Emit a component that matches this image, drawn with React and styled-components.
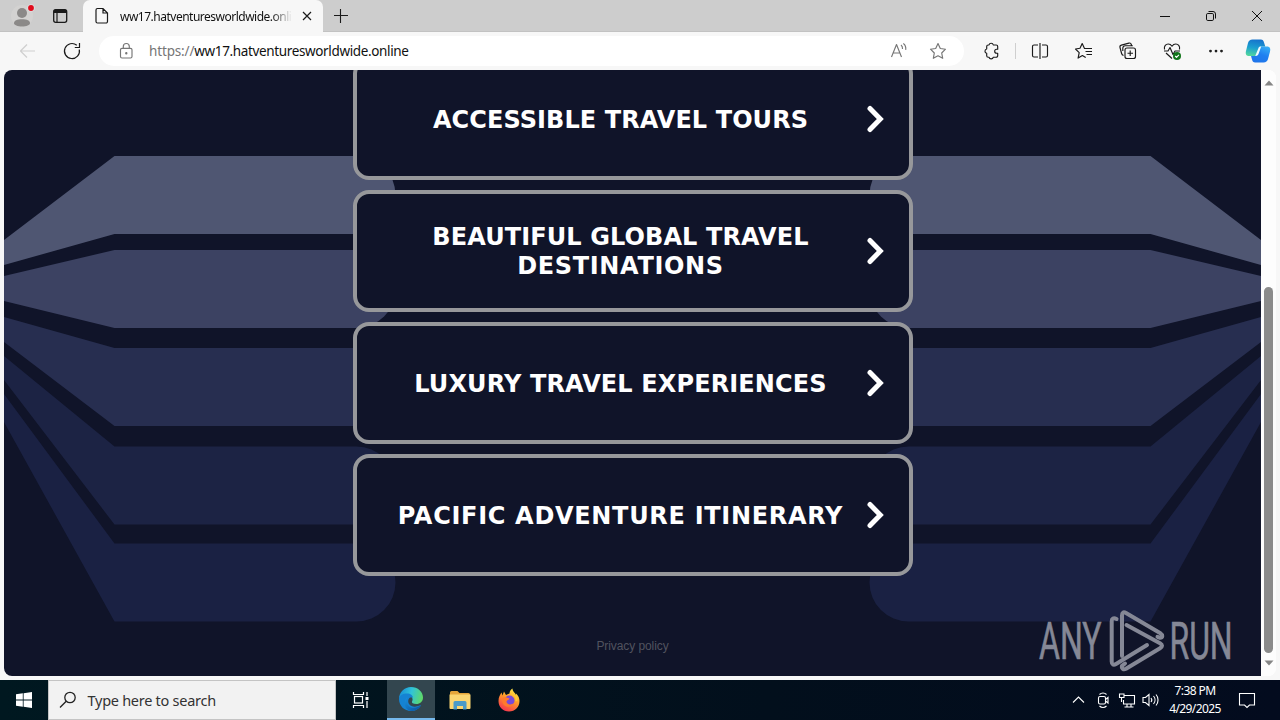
import styled, { createGlobalStyle } from "styled-components";

const links = [
  { lines: ["Accessible Travel Tours"], spacing: 0.08 },
  { lines: ["Beautiful Global Travel", "Destinations"], spacing: 0.1 },
  { lines: ["Luxury Travel Experiences"], spacing: 0.13 },
  { lines: ["Pacific Adventure Itinerary"], spacing: 0.69 },
];

// knee/edge heights of every stripe, measured inside the page
const stripes = [
  { color: "#4f5672", edge: [170, 195], knee: 86 },
  { color: "#3c4262", edge: [206, 231], knee: 180 },
  { color: "#272e50", edge: [247, 272], knee: 278 },
  { color: "#1c2344", edge: [286, 310], knee: 376.5 },
  { color: "#1a2143", edge: [324, 352], knee: 473.5 },
];

export default function App() {
  return (
    <Desktop>
      <GlobalStyle />
      <TitleBar />
      <Toolbar />
      <Content>
        <Page>
          <Stripes />
          <LinkList>
            {links.map(({ lines, spacing }) => (
              <LinkCard key={lines[0]} $spacing={spacing}>
                <LinkText>
                  {lines.map((line, i) => (
                    <LinkLine key={line} $spacing={i === 0 ? spacing : 0.65}>
                      {line}
                    </LinkLine>
                  ))}
                </LinkText>
                <Chevron />
              </LinkCard>
            ))}
          </LinkList>
          <Privacy>Privacy policy</Privacy>
          <Watermark />
        </Page>
        <Scrollbar>
          <svg width="10" height="6" viewBox="0 0 10 6">
            <path d="M5 0.5L9.5 5.5H0.5z" fill="#858585" />
          </svg>
          <Thumb />
          <svg width="10" height="6" viewBox="0 0 10 6">
            <path d="M5 5.5L9.5 0.5H0.5z" fill="#858585" />
          </svg>
        </Scrollbar>
      </Content>
      <Taskbar />
    </Desktop>
  );
}

function TitleBar() {
  return (
    <TitleRow>
      <TitleLeft>
        <svg width="44" height="32" viewBox="0 0 44 32">
          <circle cx="22" cy="16" r="11" fill="#d3d2d1" />
          <circle cx="22" cy="13" r="5" fill="#8b8988" />
          <path
            d="M14 23.2c0-2.600 3-3.900 8-3.900s8 1.300 8 3.900c0 1.800-3.500 3.300-8 3.300s-8-1.500-8-3.300z"
            fill="#8b8988"
          />
          <circle cx="31" cy="8" r="3.800" fill="#dedede" />
          <circle cx="31" cy="8" r="2.900" fill="#e00b1c" />
        </svg>
        <svg width="32" height="32" viewBox="0 0 32 32">
          <rect x="9.700" y="9.700" width="13" height="12.600" rx="2" fill="none" stroke="#1a1a1a" strokeWidth="1.300" />
          <path d="M9.500 11.500a2 2 0 0 1 2-2h9.500a2 2 0 0 1 2 2v1.500H9.500z" fill="#1a1a1a" />
          <path d="M13 12v10" stroke="#1a1a1a" strokeWidth="1.200" />
        </svg>
      </TitleLeft>
      <Tab>
        <svg width="14" height="18" viewBox="0 0 14 18">
          <path
            d="M2.500 1.500h5.500l4.500 4.500v8.500a1.500 1.500 0 0 1-1.500 1.500h-8.500a1.500 1.500 0 0 1-1.500-1.500v-11.500a1.500 1.500 0 0 1 1.500-1.500zM8 1.500v4.500h4.500"
            fill="none"
            stroke="#1a1a1a"
            strokeWidth="1.200"
          />
        </svg>
        <TabTitle>ww17.hatventuresworldwide.online</TabTitle>
        <svg width="10" height="10" viewBox="0 0 10 10">
          <path d="M1 1l8 8M9 1l-8 8" stroke="#1a1a1a" strokeWidth="1.200" />
        </svg>
      </Tab>
      <NewTab>
        <svg width="14" height="14" viewBox="0 0 14 14">
          <path d="M6.500 0v14M0 6.500h14" stroke="#1a1a1a" strokeWidth="1.100" />
        </svg>
      </NewTab>
      <WindowButton>
        <svg width="12" height="12" viewBox="0 0 12 12">
          <path d="M1 6.500h10" stroke="#111" />
        </svg>
      </WindowButton>
      <WindowButton>
        <svg width="12" height="12" viewBox="0 0 12 12">
          <rect x="1.500" y="3.500" width="7" height="7" rx="1.300" fill="none" stroke="#111" />
          <path d="M3.500 1.500h4.500a2.500 2.500 0 0 1 2.500 2.500v4.500" fill="none" stroke="#111" />
        </svg>
      </WindowButton>
      <WindowButton>
        <svg width="12" height="12" viewBox="0 0 12 12">
          <path d="M1 1l10 10M11 1L1 11" stroke="#111" />
        </svg>
      </WindowButton>
    </TitleRow>
  );
}

function Toolbar() {
  return (
    <ToolRow>
      <Tool $color="#cfcfcf">
        <path d="M17 10H2.500M9 3.500L2.500 10L9 16.500" />
      </Tool>
      <Tool>
        <path d="M17.300 8.500A7.500 7.500 0 1 1 14.800 4.300M17.500 2v4.500h-4.700" strokeWidth="1.200" />
      </Tool>
      <AddressBar>
        <Tool $width={54} $color="#767676">
          <rect x="4.500" y="7.300" width="11.500" height="9.700" rx="1.500" />
          <path d="M7.300 7.300V5.500a3 3 0 0 1 6 0v1.800" />
          <circle cx="10.300" cy="12.200" r="0.600" fill="#767676" />
        </Tool>
        <Url>
          https://<b>ww17.hatventuresworldwide.online</b>
        </Url>
        <Tool $width={39} $color="#767676">
          <path d="M2.500 16L7.500 3.500L12.500 16M4.200 12h6.600" />
          <path d="M12 4c1.300 1 1.700 2.300 1.500 4M14.300 2.500c2.100 1.500 2.800 3.600 2.400 6.300" />
        </Tool>
        <Tool $width={39} $color="#767676">
          <path d="M10 2.500l2.300 5l5.200 0.700l-3.800 3.800l1 5.300L10 14.800l-4.700 2.500l1-5.300L2.500 8.200l5.200-0.700z" />
        </Tool>
      </AddressBar>
      <Tool>
        <path d="M8 4a2.200 2.200 0 0 1 4.300 0H15.200a1.500 1.500 0 0 1 1.500 1.500V8.200h-1a2 2 0 0 0 0 4h1V14.700a1.500 1.500 0 0 1-1.500 1.500H12.300a2.200 2.200 0 0 1-4.300 0H7.200a1.500 1.500 0 0 1-1.500-1.500V12.300a2.200 2.200 0 0 1 0-4.300V5.500A1.500 1.500 0 0 1 7.200 4z" />
      </Tool>
      <Divider />
      <Tool>
        <path d="M8 4H4a1.500 1.500 0 0 0-1.500 1.500v9A1.500 1.500 0 0 0 4 16h4M12 4h4a1.500 1.500 0 0 1 1.500 1.500v9A1.500 1.500 0 0 1 16 16h-4M10 2v16" />
      </Tool>
      <Tool>
        <path d="M18 7.500h-7.500L8.200 2.500L6 7.300L1.500 8l3.700 3.600l-1.100 5.500l4.300-2.500l3.300 1.900M11.500 10.500H18M12.500 13.500H18" />
      </Tool>
      <Tool>
        <rect x="7" y="7" width="10.500" height="10.500" rx="2" />
        <path d="M12.200 9.500v5.500M9.500 12.200H15M5.500 14.500A3 3 0 0 1 3.600 12.500L2 6.500a2 2 0 0 1 1.400-2.400l7.500-2a2 2 0 0 1 2.400 1.400l0.300 1.200M4.800 10V7.200A2.600 2.600 0 0 1 7.300 4.700h7.500" />
      </Tool>
      <Tool>
        <path d="M2.500 8.500C1.800 5 4 3 6.200 3c1.800 0 3 1 3.800 2.200C10.800 4 12 3 13.800 3c2.200 0 4.400 2 3.700 5.500M4 12L10 17.500M2 10h4l2-3.500l3 7l2-3.500h5" />
        <circle cx="15" cy="15" r="4" fill="#11751a" stroke="none" />
        <path d="M13.200 15l1.300 1.300l2.400-2.500" stroke="#fff" />
      </Tool>
      <Tool>
        <circle cx="4.500" cy="10" r="0.800" fill="#1a1a1a" />
        <circle cx="10" cy="10" r="0.800" fill="#1a1a1a" />
        <circle cx="15.500" cy="10" r="0.800" fill="#1a1a1a" />
      </Tool>
      <CopilotIcon />
    </ToolRow>
  );
}

function Tool({ children, $width = 44, $color = "#1a1a1a" }) {
  return (
    <ToolButton $width={$width}>
      <svg width="20" height="20" viewBox="0 0 20 20" fill="none" stroke={$color} strokeWidth="1.150" strokeLinejoin="round">
        {children}
      </svg>
    </ToolButton>
  );
}

function CopilotIcon() {
  return (
    <ToolButton $width={40}>
      <svg width="26" height="24" viewBox="0 0 26 24">
        <defs>
          <linearGradient id="copilotLeft" x1="0.5" y1="0" x2="0.3" y2="1">
            <stop offset="0" stopColor="#1673cc" />
            <stop offset="0.5" stopColor="#1b9fd0" />
            <stop offset="1" stopColor="#52d79d" />
          </linearGradient>
          <linearGradient id="copilotRight" x1="0.8" y1="0" x2="0.3" y2="1">
            <stop offset="0" stopColor="#37aef5" />
            <stop offset="0.5" stopColor="#1f7ff0" />
            <stop offset="1" stopColor="#1f74ea" />
          </linearGradient>
        </defs>
        <path d="M18.500 23.500h-8.300c-2 0-2.700-1.200-3.200-3L5.500 15l6.500-7.500H22c3 0 3.700 2.200 3 5l-2 7.500c-0.700 2.300-2 3.500-4.500 3.500z" fill="url(#copilotRight)" />
        <path d="M7.500 0.500h8.300c2 0 2.700 1.200 3.200 3l1.300 4h-3.800c-2 0-2.800 1.200-3.400 3l-1.500 4.500c-0.500 1.500-1.300 2-2.700 2H4c-3 0-3.700-2.200-3-5L3 4C3.700 1.700 5 0.500 7.500 0.500z" fill="url(#copilotLeft)" />
        <path d="M13.700 8.500c0.500-0.700 1-1 2-1h0.500l-2.500 7c-0.500 1.500-1.200 2.500-3 2.500h-0.500z" fill="#eefaff" />
      </svg>
    </ToolButton>
  );
}

function Stripes() {
  const shapes = stripes.map(({ color, edge, knee }) => (
    <path
      key={color}
      fill={color}
      d={`M0 ${edge[0]}L110.500 ${knee}H352.500a39 39 0 0 1 0 78H110.500L0 ${edge[1]}z`}
    />
  ));
  return (
    <StripeArt viewBox="0 0 1257 606">
      <g>{shapes}</g>
      <g transform="translate(1257 0) scale(-1 1)">{shapes}</g>
    </StripeArt>
  );
}

function Chevron() {
  return (
    <svg width="18" height="28" viewBox="0 0 18 28">
      <path d="M4 3.500L14.300 14L4 24.500" fill="none" stroke="#fff" strokeWidth="5" strokeLinecap="round" />
    </svg>
  );
}

function Watermark() {
  return (
    <WatermarkArt viewBox="0 0 196 64">
      <g>
        <text x="1.600" y="50" textLength="101" lengthAdjust="spacingAndGlyphs" transform="scale(0.620 1)">
          ANY
        </text>
        <text x="212" y="50" textLength="102" lengthAdjust="spacingAndGlyphs" transform="scale(0.620 1)">
          RUN
        </text>
      </g>
      <g fill="none" stroke="#858896" strokeWidth="4" strokeLinejoin="round" strokeLinecap="round">
        <path d="M78.500 10C75.500 8.500 73.700 9.500 73.700 12.500V52.500C73.700 55.700 75.500 56.500 78 55L109 36" />
        <path d="M84 47V6.500C84 3.500 85.500 2.500 88 4L122 24C125 26 125 29 122 28.800L119.500 27.800" />
        <path d="M88.500 16L122 34.300C124.700 36 124.700 37.700 122 39.300L88 59.700C85.500 61 83.300 59.500 84 56.800L87 54.500" />
      </g>
    </WatermarkArt>
  );
}

function Taskbar() {
  return (
    <TaskRow>
      <TaskItem>
        <svg width="16" height="16" viewBox="0 0 16 16" fill="#fff">
          <path d="M0 2.300L6.800 1.300V7.600H0zM7.600 1.200L16 0V7.600H7.600zM0 8.400h6.800v6.300L0 13.700zM7.600 8.400H16V16l-8.400-1.200z" />
        </svg>
      </TaskItem>
      <Search>
        <svg width="18" height="18" viewBox="0 0 18 18" fill="none" stroke="#222" strokeWidth="1.300">
          <circle cx="11" cy="6.500" r="5.200" />
          <path d="M7.200 10.300L1 16.500" />
        </svg>
        Type here to search
      </Search>
      <TaskItem>
        <svg width="18" height="18" viewBox="0 0 18 18" fill="none" stroke="#fff" strokeWidth="1.200">
          <path d="M1.500 1v2.500h10V1M1.500 17v-2.500h10V17M15 1v4M15 10v7" />
          <rect x="2.500" y="5.500" width="8" height="6.500" />
          <path d="M13.500 7.500h3" strokeWidth="3" />
        </svg>
      </TaskItem>
      <TaskItem $active>
        <svg width="26" height="26" viewBox="0 0 26 26">
          <defs>
            <linearGradient id="edgeTop" x1="0" y1="0.3" x2="1" y2="0.5">
              <stop offset="0" stopColor="#168dd8" />
              <stop offset="0.5" stopColor="#31c3d8" />
              <stop offset="1" stopColor="#5fd968" />
            </linearGradient>
            <linearGradient id="edgeLow" x1="0" y1="0" x2="1" y2="1">
              <stop offset="0" stopColor="#1a93e0" />
              <stop offset="1" stopColor="#0a4f9c" />
            </linearGradient>
          </defs>
          <path d="M1 13C1 6 6.500 1 13 1c7 0 12 5 12 10.500c0 4-3 6.500-6.700 6.500c-3.300 0-4.800-1.300-4.300-2.500c1.500-2.300 0-6-4.500-6C5 9.500 1 11 1 13z" fill="url(#edgeTop)" />
          <path d="M1 13c0-3.500 4-5.500 8-5.500c3.500 0 6 2 6 4.500c-1-1.200-3.500-1-4.500 1.500c-1.500 4.500 3 8 7.500 7c2.500-0.500 4-1.500 5-1.300C21 23 17 25 13 25C6.500 25 1 20 1 13z" fill="#1583d3" />
          <path d="M9.500 11c-3 4 0 9.500 4 10.500c3.500 0.800 7-1 9.500-2.300C21 23 17 25 13 25C8 24 6.500 20 6.800 17C7 14 8 12 9.500 11z" fill="url(#edgeLow)" />
        </svg>
      </TaskItem>
      <TaskItem>
        <svg width="24" height="22" viewBox="0 0 24 22">
          <path d="M2 3.500a1.500 1.500 0 0 1 1.500-1.500h6l2 2H20.500A1.500 1.500 0 0 1 22 5.500V18.500H2z" fill="#e5a53a" />
          <path d="M1.500 5.500h21v13.500a1 1 0 0 1-1 1h-19a1 1 0 0 1-1-1z" fill="#fbd571" />
          <path d="M5.500 20.500v-7a1.500 1.500 0 0 1 1.500-1.500h10a1.500 1.500 0 0 1 1.500 1.500v7h-3.500v-3.500h-6V20.500z" fill="#4a9ac8" />
        </svg>
      </TaskItem>
      <TaskItem>
        <svg width="24" height="24" viewBox="0 0 24 24">
          <defs>
            <linearGradient id="fox" x1="0.8" y1="0" x2="0.3" y2="1">
              <stop offset="0" stopColor="#fff04a" />
              <stop offset="0.450" stopColor="#ff9c28" />
              <stop offset="1" stopColor="#f5334f" />
            </linearGradient>
          </defs>
          <path d="M1.500 13C1.500 9 3 7 4.500 4.500L5.500 7.500L7 3.500L9 7c1.500-1 3-1 3.500-1.500C12.500 3.500 13.500 1.500 15.500 0.500C15.500 3.500 18 4.500 19 7V5.500c2.500 2 3.500 5 3.500 7.500C22.500 19 18 23.500 12 23.500S1.500 19 1.500 13z" fill="url(#fox)" />
          <circle cx="12.500" cy="12.500" r="5" fill="#784ad8" />
          <path d="M5.500 10c2-1.500 4.500-0.500 7 0.500c-0.500 1.500-2.500 1.500-3 3c0 3 4.500 4 7.500 1.500c-1 4-7.500 5.500-10.500 1.500C5 14 5 12 5.500 10z" fill="#ff7a2b" />
          <path d="M14 6c3 0.500 5 3.500 4.500 7.500l2-1C21 9 18.500 6 15.500 4.500z" fill="#ffc935" />
        </svg>
      </TaskItem>
      <Tray>
        <svg width="18" height="18" viewBox="0 0 18 18">
          <path d="M3 11.500L8.500 6L14 11.500" />
        </svg>
        <svg width="18" height="18" viewBox="0 0 18 18">
          <rect x="4.500" y="5.500" width="7" height="7.500" rx="1.500" />
          <path d="M11.500 8.500l2.500-2v5.500l-2.500-2M5.500 3.500c2-2 5-2 7 0M5.500 15c2 2 5 2 7 0" />
        </svg>
        <svg width="18" height="18" viewBox="0 0 18 18">
          <path d="M6 4.500h10.500v8.500H5.500V9M9 13v3M13 13v3M6.500 16h9M1.500 3h4.500v3.500h-4.500zM3.500 6.500V11" />
        </svg>
        <svg width="18" height="18" viewBox="0 0 18 18">
          <path d="M1 6.500h2.500L7 3.500v11l-3.500-3H1zM9 7c1 1.200 1 2.800 0 4M11.500 5c2 2.300 2 5.700 0 8M14 3.500c2.700 3 2.700 8 0 11" />
        </svg>
        <Clock>
          <span>7:38 PM</span>
          <span>4/29/2025</span>
        </Clock>
        <svg width="18" height="18" viewBox="0 0 18 18">
          <path d="M1.500 2.500h15v11.500h-5L9 16.500L6.500 14h-5z" />
        </svg>
      </Tray>
    </TaskRow>
  );
}

// -------------css
const GlobalStyle = createGlobalStyle`
  * {
    box-sizing: border-box;
  }
  body {
    margin: 0;
    overflow: hidden;
    font-family: "Noto Sans", "Open Sans", sans-serif;
  }
  svg {
    flex-shrink: 0;
    display: block;
  }
`;

const Desktop = styled.div`
  width: 1280px;
  height: 720px;
  display: flex;
  flex-direction: column;
  background-color: #f7f7f7;
`;

const TitleRow = styled.header`
  height: 32px;
  display: flex;
  background-color: #cdcdcd;
  border-bottom: 1px solid #c2c2c2;
`;

const TitleLeft = styled.div`
  width: 83px;
  display: flex;
`;

const Tab = styled.div`
  width: 240px;
  height: 32px;
  padding: 0 11px 0 12px;
  display: flex;
  align-items: center;
  background-color: #f7f7f7;
  border-radius: 7px 7px 0 0;
`;

const TabTitle = styled.span`
  width: 173px;
  margin: 0 10px 0 11px;
  overflow: hidden;
  white-space: nowrap;
  font-size: 12px;
  letter-spacing: -0.5px;
  color: #111111;
  mask-image: linear-gradient(to right, #000 88%, transparent);
`;

const NewTab = styled.div`
  width: 36px;
  margin-right: auto;
  display: flex;
  align-items: center;
  justify-content: center;
`;

const WindowButton = styled.div`
  width: 46px;
  display: flex;
  align-items: center;
  justify-content: center;
`;

const ToolRow = styled.nav`
  height: 38px;
  padding-left: 6px;
  display: flex;
  align-items: center;
`;

const ToolButton = styled.div`
  width: ${(props) => props.$width}px;
  display: flex;
  flex-shrink: 0;
  align-items: center;
  justify-content: center;
`;

const AddressBar = styled.div`
  width: 865px;
  height: 30px;
  margin: 0 5px;
  padding-right: 7px;
  display: flex;
  align-items: center;
  border-radius: 15px;
  background-color: #ffffff;
`;

const Url = styled.span`
  flex: 1;
  margin-left: -4px;
  font-size: 13.5px;
  letter-spacing: -0.15px;
  color: #767676;
  b {
    font-weight: 400;
    letter-spacing: -0.36px;
    color: #111111;
  }
`;

const Divider = styled.div`
  width: 1px;
  height: 16px;
  margin: 0 2px;
  background-color: #cfcfcf;
`;

const Content = styled.div`
  height: 606px;
  margin: 0 4px 4px;
  display: flex;
  overflow: hidden;
  border-radius: 8px;
  background-color: #ffffff;
`;

const Page = styled.main`
  width: 1257px;
  position: relative;
  display: flex;
  flex-direction: column;
  align-items: center;
  overflow: hidden;
  background-color: #101429;
`;

const StripeArt = styled.svg`
  position: absolute;
  left: 0;
  top: 0;
  width: 1257px;
  height: 606px;
`;

const LinkList = styled.div`
  width: 560px;
  margin-top: -12px;
  position: relative;
  display: flex;
  flex-direction: column;
  gap: 10px;
`;

const LinkCard = styled.div`
  height: 122px;
  padding: 0 25px 0 36px;
  display: flex;
  align-items: center;
  justify-content: space-between;
  border: 4px solid #97989b;
  border-radius: 16px;
  background-color: #101429;
`;

const LinkText = styled.div`
  width: 456px;
  padding-top: 2px;
  display: flex;
  flex-direction: column;
  align-items: center;
  text-transform: uppercase;
  font-family: "DejaVu Sans", sans-serif;
  font-size: 24px;
  font-weight: 700;
  line-height: 29px;
  color: #ffffff;
`;

const LinkLine = styled.span`
  white-space: nowrap;
  letter-spacing: ${(props) => props.$spacing}px;
`;

const Privacy = styled.p`
  margin: 63px 0 0;
  position: relative;
  font-family: "Liberation Sans", sans-serif;
  font-size: 12px;
  line-height: 14px;
  letter-spacing: -0.08px;
  color: #51535f;
`;

const WatermarkArt = styled.svg`
  position: absolute;
  right: 27px;
  bottom: 3px;
  width: 196px;
  height: 64px;
  font-family: Roboto, sans-serif;
  font-size: 51px;
  font-weight: 400;
  text {
    fill: #858896;
    stroke: #858896;
    stroke-width: 0.6;
  }
`;

const Scrollbar = styled.div`
  width: 15px;
  padding: 10px 0;
  display: flex;
  flex-direction: column;
  align-items: center;
  background-color: #fdfdfd;
`;

const Thumb = styled.div`
  width: 9px;
  height: 366px;
  margin: auto 0 7px;
  border-radius: 5px;
  background-color: #8b8b8b;
`;

const TaskRow = styled.footer`
  height: 40px;
  display: flex;
  background: linear-gradient(to right, #001820, #020f1c 60%, #030b1e);
`;

const TaskItem = styled.div`
  width: ${(props) => (props.$active ? 48 : 49)}px;
  display: flex;
  align-items: center;
  justify-content: center;
  background-color: ${(props) => (props.$active ? "#33464f" : "transparent")};
  border-bottom: ${(props) => (props.$active ? "2px solid #76b9ed" : "0")};
  &:first-child {
    width: 48px;
  }
  &:nth-child(3) {
    width: 51px;
    padding-right: 2px;
  }
`;

const Search = styled.div`
  width: 288px;
  padding-left: 10px;
  display: flex;
  align-items: center;
  gap: 10.5px;
  border: 1px solid #c4c4c4;
  background-color: #f2f2f2;
  font-size: 14.5px;
  letter-spacing: -0.27px;
  color: #333333;
`;

const Tray = styled.div`
  margin-left: auto;
  padding-right: 24px;
  display: flex;
  align-items: center;
  gap: 6px;
  svg {
    fill: none;
    stroke: #ffffff;
    stroke-width: 1.1;
  }
`;

const Clock = styled.div`
  width: 58px;
  margin-right: 8px;
  display: flex;
  flex-direction: column;
  align-items: center;
  font-size: 12px;
  line-height: 18px;
  letter-spacing: -0.6px;
  color: #ffffff;
`;
